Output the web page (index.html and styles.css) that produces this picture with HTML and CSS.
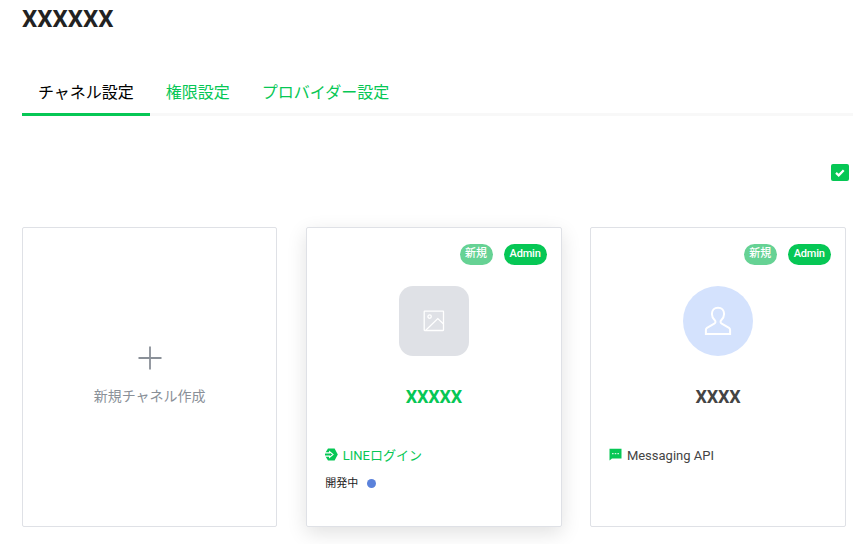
FILE: index.html
```html
<!DOCTYPE html>
<html lang="ja">
<head>
    <title>XXXXXX</title>
    <meta charset="utf-8">
    <meta name="viewport" content="width=device-width, initial-scale=1.0">
    <link rel="stylesheet" href="styles.css">
</head>

<body>

    <header>
        <h1>XXXXXX</h1>
        <nav class="tabs">
            <a class="tab active">チャネル設定</a>
            <a class="tab">権限設定</a>
            <a class="tab">プロバイダー設定</a>
        </nav>
    </header>

    <div class="filter">
        <span class="checkbox">
            <svg width="10" height="8" viewBox="0 0 10 8"><path d="M1 3.9L3.7 6.3L8.7 1.2" fill="none" stroke="#fff" stroke-width="2.3"/></svg>
        </span>
    </div>

    <main class="cards">
        <article class="card create">
            <svg width="24" height="24" viewBox="0 0 24 24"><path d="M12 .5V23.5M.5 12H23.5" fill="none" stroke="#8a9098" stroke-width="1.8"/></svg>
            <span>新規チャネル作成</span>
        </article>

        <article class="card hover">
            <div class="badges">
                <span class="badge new">新規</span>
                <span class="badge">Admin</span>
            </div>
            <div class="thumb">
                <svg width="22" height="22" viewBox="0 0 22 22" fill="none" stroke="#fff" stroke-width="1.3"><rect x="1.2" y="1.2" width="19.3" height="19.3" rx=".5"/><circle cx="6.6" cy="6.6" r="1.7"/><path d="M3 20L14.8 8.6L20.5 14"/></svg>
            </div>
            <h2>XXXXX</h2>
            <p class="type">
                <svg width="13" height="13" viewBox="0 0 13 13"><path d="M3 .5H9.6L12.8 6.5L9.6 12.5H3L1 9.2L0 7.4V5.6L1 3.8Z" fill="#06c755"/><path d="M0 4.9H4.6V3.6L8 6.5L4.6 9.4V8.1H0" fill="none" stroke="#fff" stroke-width="1.1"/></svg>
                <span>LINEログイン</span>
            </p>
            <p class="status"><span>開発中</span> <i class="dot"></i></p>
        </article>

        <article class="card">
            <div class="badges">
                <span class="badge new">新規</span>
                <span class="badge">Admin</span>
            </div>
            <div class="thumb user">
                <svg width="28" height="30" viewBox="0 0 28 30"><path d="M14 1.7C10.3 1.7 7.9 4.4 7.9 8.1C7.9 10.8 9.2 12.8 10.8 14.3C11.9 15.4 11.6 16.9 10.3 17.6L3 21.8C2.2 22.3 1.9 23 1.9 24V28.1H26.1V24C26.1 23 25.8 22.3 25 21.8L17.7 17.6C16.4 16.9 16.1 15.4 17.2 14.3C18.8 12.8 20.1 10.8 20.1 8.1C20.1 4.4 17.7 1.7 14 1.7Z" fill="none" stroke="#fff" stroke-width="2"/></svg>
            </div>
            <h2>XXXX</h2>
            <p class="type">
                <svg width="13" height="13" viewBox="0 0 13 13"><path d="M.5 .7H12.5V10.6H3L.5 12.4Z" fill="#06c755"/><path d="M3 5.7H4.6M5.7 5.7H7.3M8.4 5.7H10" stroke="#fff" stroke-width="1.2" opacity=".8"/></svg>
                <span>Messaging API</span>
            </p>
        </article>
    </main>

</body>
</html>
```

FILE: styles.css
```css
body {
    margin: 0;
    height: 100vh;
    padding-left: 22px;
    background-color: #fff;
    font-family: Roboto, "Noto Sans CJK JP", sans-serif;
    color: #444;
    overflow: hidden;
}

h1 {
    margin: 0;
    padding-top: 4px;
    font-size: 24px;
    line-height: 30px;
    color: #222;
}

.tabs {
    display: flex;
    margin-top: 34px;
    box-shadow: inset 0 -3px #f8f8f8;
}

.tab {
    padding: 13px 16px 8px;
    border-bottom: 3px solid transparent;
    font-size: 16px;
    line-height: 24px;
    color: #06c755;
}

.tab.active {
    color: #000;
    border-color: #06c755;
}

.filter {
    display: flex;
    justify-content: flex-end;
    padding: 48px 4px 46px 0;
}

.checkbox {
    display: flex;
    align-items: center;
    justify-content: center;
    width: 18px;
    height: 17px;
    border-radius: 2px;
    background-color: #06c755;
}

.cards {
    display: grid;
    grid-template-columns: repeat(3, 255.4px);
    gap: 28.8px;
}

.card {
    box-sizing: border-box;
    height: 300px;
    padding: 16px 14px 0 18px;
    border: 1px solid #dfe1e6;
    border-radius: 2px;
}

.card.hover {
    box-shadow: 0 6px 20px rgba(0, 0, 0, .12);
}

.card.create {
    display: flex;
    flex-direction: column;
    align-items: center;
    padding: 118px 0 0;
    font-size: 14px;
    line-height: 20px;
    color: #8a9098;
}

.create span {
    margin-top: 16px;
}

.badges {
    display: flex;
    justify-content: flex-end;
    gap: 11px;
}

.badge {
    height: 21px;
    padding: 0 6px;
    border-radius: 11px;
    background-color: #06c755;
    font-size: 11px;
    font-weight: 500;
    line-height: 19px;
    letter-spacing: -.2px;
    color: #fff;
}

.badge.new {
    padding: 0 5.5px;
    background-color: #66d294;
    letter-spacing: 0;
}

.thumb {
    display: flex;
    align-items: center;
    justify-content: center;
    width: 70px;
    height: 70px;
    margin: 21px auto 0;
    border-radius: 14px;
    background-color: #dfe1e6;
    transform: translateX(-2px);
}

.thumb.user {
    border-radius: 50%;
    background-color: #d4e2fd;
}

h2 {
    margin: 28px 0 0;
    padding-right: 4px;
    font-size: 18px;
    line-height: 26px;
    letter-spacing: -.2px;
    text-align: center;
}

.hover h2, .hover .type {
    color: #06c755;
}

.type {
    display: flex;
    gap: 4.5px;
    margin: 36px 0 0;
    font-size: 13px;
    line-height: 20px;
}

.type svg {
    margin-top: 1.5px;
}

.status {
    display: flex;
    align-items: center;
    gap: 9px;
    margin: 7px 0 0;
    font-size: 11px;
    line-height: 20px;
    color: #222;
}

.status span {
    padding-top: 1px;
}

.dot {
    width: 9px;
    height: 9px;
    border-radius: 50%;
    background-color: #5b82db;
}
```
